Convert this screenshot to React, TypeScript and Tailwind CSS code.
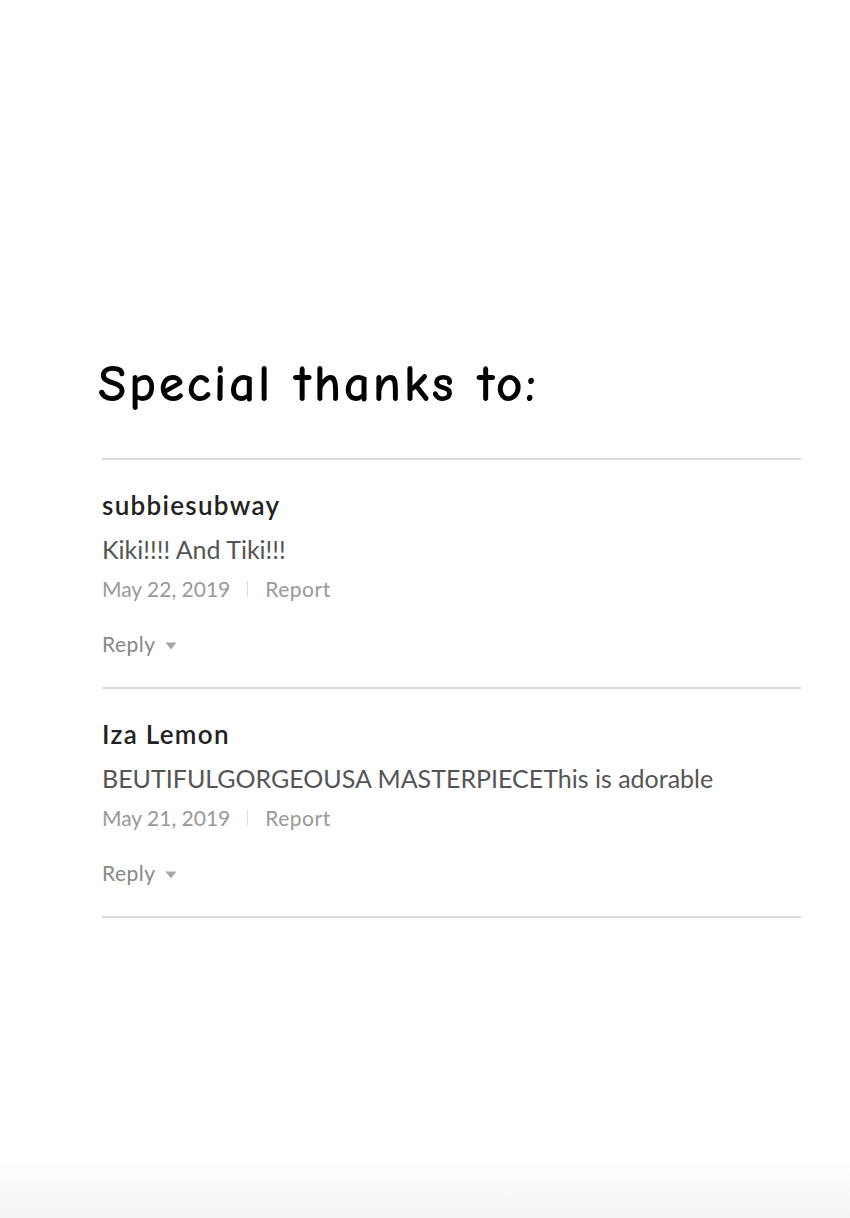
import React from "react";

const comments = [
  { name: "subbiesubway", text: "Kiki!!!! And Tiki!!!", date: "May 22, 2019" },
  { name: "Iza Lemon", text: "BEUTIFULGORGEOUSA MASTERPIECEThis is adorable", date: "May 21, 2019" },
];

function Caret() {
  return (
    <svg width="12" height="8" viewBox="0 0 12 8" className="ml-[9px] mt-[3px]">
      <path d="M0.5 0.5 H11.5 L6 7.5 Z" fill="#a8a8a8" />
    </svg>
  );
}

export default function App() {
  return (
    <div className="w-[850px] h-[1218px] bg-white flex flex-col relative overflow-hidden" style={{ fontFamily: "Lato, 'Open Sans', sans-serif" }}>
      <div className="pt-[352px] pl-[98px]">
        <h1
          className="text-[52px] font-bold text-black leading-[64px] tracking-[2.6px]"
          style={{ fontFamily: "'Comic Sans MS', 'Comic Neue', 'Noto Sans', sans-serif" }}
        >
          Special thanks to:
        </h1>
      </div>
      <div className="ml-[102px] w-[699px] mt-[42px] border-t-[2px] border-[#dcdcdc]">
        {comments.map((c) => (
          <div key={c.name} className="border-b-[2px] border-[#dcdcdc] pt-[28px] pb-[28px] flex flex-col">
            <div className="text-[26px] leading-[34px] text-[#222] font-semibold tracking-[1.3px]">{c.name}</div>
            <div className="text-[25px] leading-[34px] mt-[10px] text-[#555]">{c.text}</div>
            <div className="flex items-center text-[21px] leading-[30px] mt-[8px] text-[#999]">
              <span>{c.date}</span>
              <span className="mx-[17px] w-[1px] h-[16px] bg-[#ddd]" />
              <span className="tracking-[0.5px]">Report</span>
            </div>
            <div className="flex items-center text-[21px] leading-[30px] mt-[25px] text-[#888]">
              <span className="tracking-[0.5px]">Reply</span>
              <Caret />
            </div>
          </div>
        ))}
      </div>
      <div className="absolute left-0 right-0 bottom-0 h-[60px] bg-gradient-to-b from-white to-[#f4f4f4]" />
    </div>
  );
}
